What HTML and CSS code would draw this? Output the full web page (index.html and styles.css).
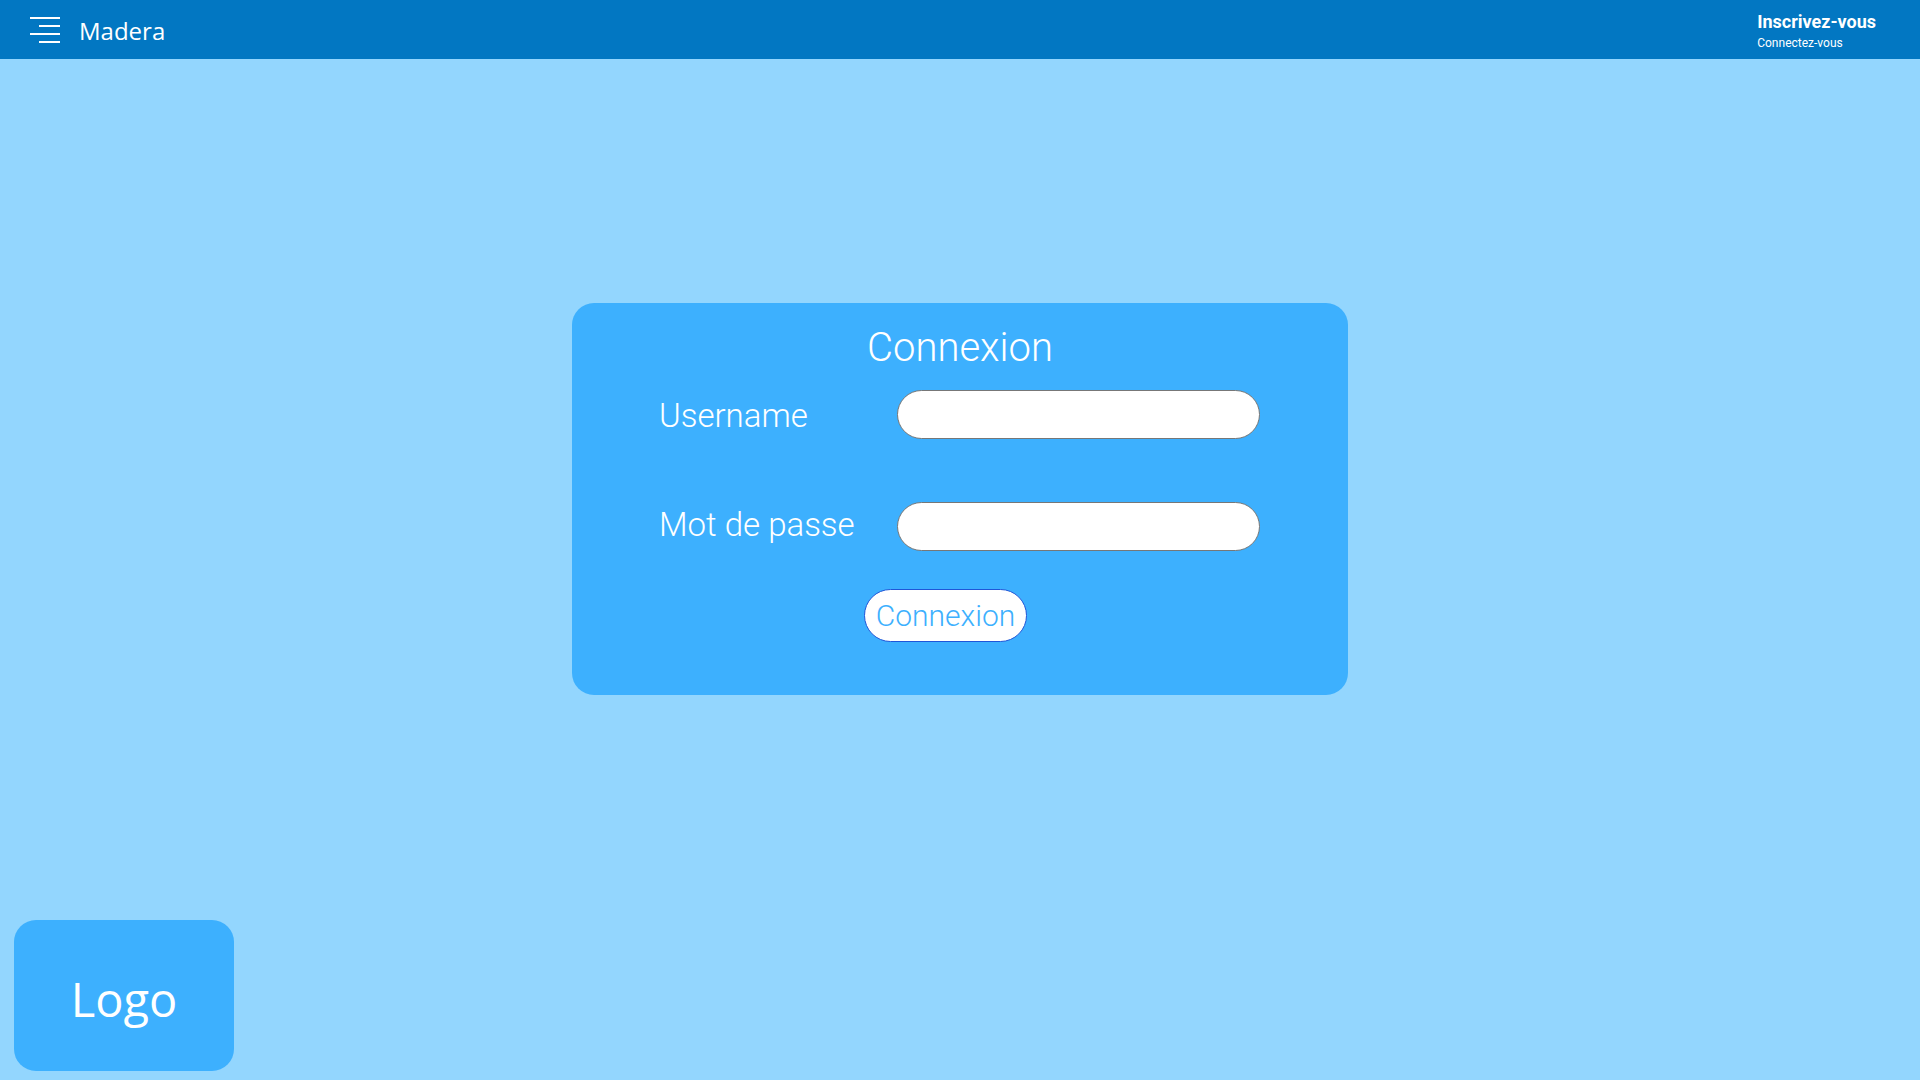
FILE: index.html
```html
<!DOCTYPE html>
<html lang="fr">
<head>
<meta charset="utf-8">
<title>Madera - Connexion</title>
<link rel="stylesheet" href="styles.css">
</head>
<body>
<div class="page">
  <header class="topbar">
    <div class="brand">
      <svg class="burger" width="30" height="26" viewBox="0 0 30 26" aria-hidden="true">
        <rect x="0" y="0" width="30" height="2" fill="#fff"/>
        <rect x="9" y="8" width="21" height="2" fill="#fff"/>
        <rect x="0" y="16" width="30" height="2" fill="#fff"/>
        <rect x="9" y="24" width="21" height="2" fill="#fff"/>
      </svg>
      <span class="brand-name">Madera</span>
    </div>
    <div class="account">
      <div class="account-main">Inscrivez-vous</div>
      <div class="account-sub">Connectez-vous</div>
    </div>
  </header>

  <main class="main">
    <form class="card">
      <h1 class="card-title">Connexion</h1>
      <div class="row row-first">
        <label class="label" for="user">Username</label>
        <input class="field" id="user" type="text">
      </div>
      <div class="row row-second">
        <label class="label" for="pass">Mot de passe</label>
        <input class="field" id="pass" type="password">
      </div>
      <div class="actions">
        <button class="btn" type="button">Connexion</button>
      </div>
    </form>
  </main>

  <footer class="footer">
    <div class="logo">Logo</div>
  </footer>
</div>
</body>
</html>
```

FILE: styles.css
```css
* { box-sizing: border-box; }

html, body {
  margin: 0;
  padding: 0;
}

body {
  background: #93d6fe;
  font-family: "Roboto", "Liberation Sans", sans-serif;
  color: #fff;
}

.page {
  height: 100vh;
  display: flex;
  flex-direction: column;
}

.topbar {
  height: 59px;
  flex: 0 0 59px;
  background: #0277c2;
  display: flex;
  justify-content: space-between;
  align-items: flex-start;
}

.brand {
  display: flex;
  align-items: flex-start;
  padding-left: 30px;
  padding-top: 17px;
}

.burger { display: block; }

.brand-name {
  font-family: "Open Sans", "Noto Sans", sans-serif;
  font-size: 24px;
  line-height: 32px;
  margin-left: 19px;
  margin-top: -2px;
}

.account {
  padding-right: 44px;
  padding-top: 11px;
  display: flex;
  flex-direction: column;
}

.account-main {
  font-size: 18px;
  font-weight: 700;
  line-height: 21px;
}

.account-sub {
  font-size: 12px;
  line-height: 14px;
  margin-top: 4px;
}

.main {
  flex: 1;
  display: flex;
  justify-content: center;
  align-items: flex-start;
}

.card {
  margin: 244px 0 0;
  width: 776px;
  height: 392px;
  background: #3db0fe;
  border-radius: 22px;
  padding: 21px 88px 0 87px;
  display: flex;
  flex-direction: column;
}

.card-title {
  margin: 0 -88px 0 -87px;
  text-align: center;
  font-weight: 300;
  font-size: 40px;
  line-height: 48px;
}

.row {
  display: flex;
  align-items: center;
  margin-top: 18px;
  height: 49px;
}

.row-second { margin-top: 63px; }

.label {
  width: 238px;
  flex: 0 0 238px;
  font-size: 33px;
  font-weight: 300;
  line-height: 40px;
}

.row-first .label { margin-top: 3px; }
.row-second .label { margin-top: -3px; }

.field {
  width: 363px;
  height: 49px;
  border: 1px solid #777;
  border-radius: 25px;
  background: #fff;
  outline: none;
  padding: 0 20px;
  font-size: 18px;
}

.actions {
  display: flex;
  padding-left: 205px;
  margin-top: 38px;
}

.btn {
  width: 163px;
  height: 53px;
  border: 1px solid #1f56d8;
  border-radius: 27px;
  background: #fff;
  color: #3db0fe;
  font-family: "Roboto", "Liberation Sans", sans-serif;
  font-size: 30px;
  font-weight: 300;
  padding: 0;
  line-height: 51px;
}

.footer {
  display: flex;
  padding: 0 0 9px 14px;
}

.logo {
  width: 220px;
  height: 151px;
  background: #3db0fe;
  border-radius: 22px;
  display: flex;
  align-items: center;
  justify-content: center;
  font-family: "Open Sans", "Noto Sans", sans-serif;
  font-size: 47px;
  padding-top: 6px;
}
```
